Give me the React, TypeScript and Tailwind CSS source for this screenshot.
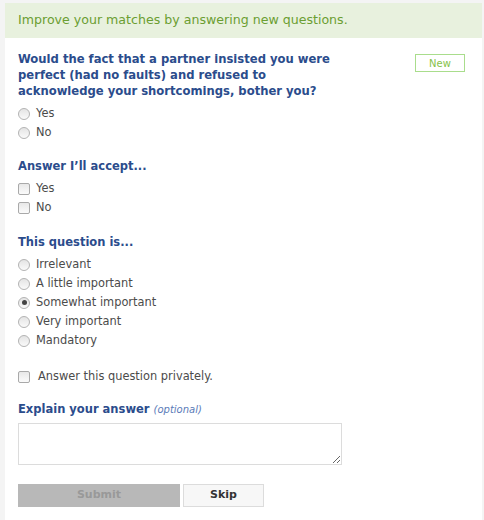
import React from "react";

const font = { fontFamily: '"DejaVu Sans", Verdana, sans-serif' };

function Radio({ checked = false }: { checked?: boolean }) {
  return (
    <span className="flex h-[12px] w-[12px] shrink-0 items-center justify-center rounded-full border border-[#b3b3b3] bg-gradient-to-b from-[#e4e4e4] to-[#fafafa]">
      {checked && <span className="h-[5px] w-[5px] rounded-full bg-[#444]" />}
    </span>
  );
}

function Box() {
  return (
    <span className="block h-[12px] w-[12px] shrink-0 rounded-[2px] border border-[#a9a9a9] bg-gradient-to-b from-[#e8e8e8] to-[#fbfbfb]" />
  );
}

function Option({ label, kind, checked }: { label: string; kind: "radio" | "box"; checked?: boolean }) {
  return (
    <div className="flex h-[19px] items-center gap-[6px] text-[11.4px] text-[#4b4b4b]">
      {kind === "radio" ? <Radio checked={checked} /> : <Box />}
      <span>{label}</span>
    </div>
  );
}

function Heading({ children }: { children: React.ReactNode }) {
  return <h3 className="text-[11.5px] font-bold leading-[16px] text-[#2b4c8c]">{children}</h3>;
}

export default function App() {
  const importance = ["Irrelevant", "A little important", "Somewhat important", "Very important", "Mandatory"];

  return (
    <div className="flex h-[520px] overflow-hidden bg-[#f4f4f4] pl-[5px] pr-[2px] pt-[3px]" style={font}>
      <div className="flex-1 bg-white">
        <div className="flex h-[35px] items-center bg-[#e8f1de] px-[13px] text-[12.6px] text-[#6b9e32]">
          Improve your matches by answering new questions.
        </div>

        <div className="px-[13px] pt-[13px]">
          <div className="flex items-start justify-between pr-[4px]">
            <h2 className="w-[325px] text-[11.6px] font-bold leading-[16px] text-[#2b4c8c]">
              Would the fact that a partner insisted you were perfect (had no faults) and refused to acknowledge your
              shortcomings, bother you?
            </h2>
            <span className="mt-[3px] flex h-[18px] w-[50px] items-center justify-center border border-[#a9dd8c] text-[10px] text-[#86c24a]">
              New
            </span>
          </div>

          <div className="mt-[5px]">
            <Option kind="radio" label="Yes" />
            <Option kind="radio" label="No" />
          </div>

          <div className="mt-[16px]">
            <Heading>Answer I’ll accept...</Heading>
            <div className="mt-[5px]">
              <Option kind="box" label="Yes" />
              <Option kind="box" label="No" />
            </div>
          </div>

          <div className="mt-[17px]">
            <Heading>This question is...</Heading>
            <div className="mt-[5px]">
              {importance.map((l) => (
                <Option key={l} kind="radio" label={l} checked={l === "Somewhat important"} />
              ))}
            </div>
          </div>

          <div className="mt-[17px] flex h-[19px] items-center gap-[8px] text-[11.4px] text-[#4b4b4b]">
            <Box />
            <span>Answer this question privately.</span>
          </div>

          <div className="mt-[15px]">
            <Heading>
              Explain your answer{" "}
              <span className="text-[10px] font-normal italic text-[#5a7bb8]">(optional)</span>
            </Heading>
            <textarea className="mt-[5px] block h-[42px] w-[324px] border border-[#dcdcdc] outline-none" />
          </div>

          <div className="mt-[19px] flex gap-[3px]">
            <button className="h-[23px] w-[162px] bg-[#b8b8b8] text-[11px] font-bold text-[#999]">Submit</button>
            <button className="h-[23px] w-[81px] border border-[#dcdcdc] bg-[#f7f7f7] text-[11px] font-bold text-[#333]">
              Skip
            </button>
          </div>
        </div>
      </div>
    </div>
  );
}
